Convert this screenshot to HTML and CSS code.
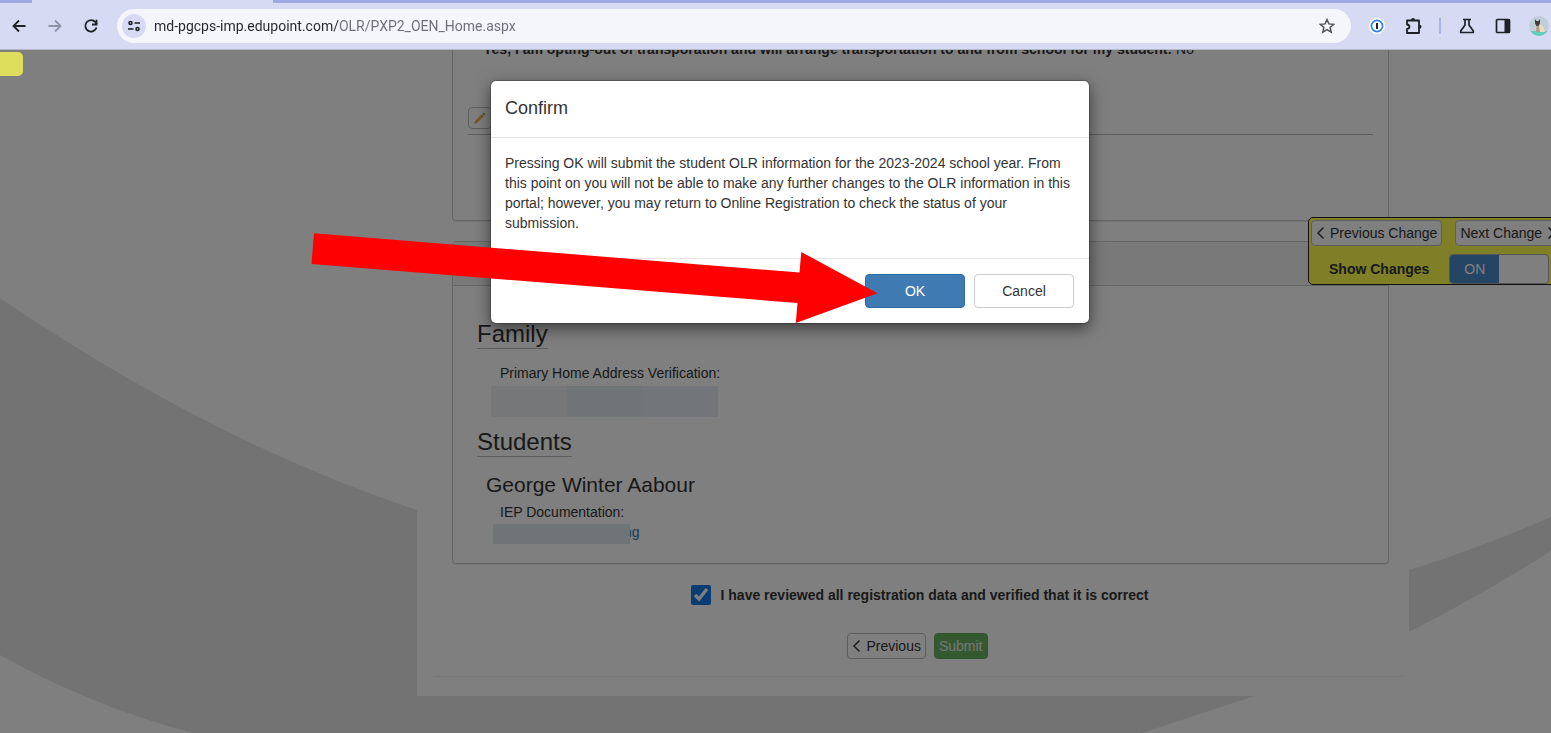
FILE: index.html
```html
<!DOCTYPE html>
<html lang="en">
<head>
    <meta charset="UTF-8">
    <meta name="viewport" content="width=device-width, initial-scale=1.0">
    <title>Online Registration</title>
    <link rel="stylesheet" href="styles.css">
</head>
<body>
    <header class="browser">
        <div class="tab-strip"><div class="active-tab"></div></div>
        <div class="toolbar">
            <button class="tool" aria-label="Back">
                <svg width="16" height="16" viewBox="0 0 16 16" fill="none" stroke="#1f2128" stroke-width="1.800"><path d="M14.500 8H3M8 2.500L2.500 8 8 13.500"/></svg>
            </button>
            <button class="tool" aria-label="Forward">
                <svg width="16" height="16" viewBox="0 0 16 16" fill="none" stroke="#8e93a8" stroke-width="1.800"><path d="M1.500 8H13M8 2.500l5.500 5.500L8 13.500"/></svg>
            </button>
            <button class="tool" aria-label="Reload">
                <svg width="16" height="16" viewBox="0 0 16 16" fill="none" stroke="#1f2128" stroke-width="1.800"><path d="M13.500 9.500A5.700 5.700 0 1 1 12.400 4.200L14 6"/><path d="M13.500 1.800v4.700H9"/></svg>
            </button>
            <div class="address">
                <button class="site-info" aria-label="Site information">
                    <svg width="14" height="12" viewBox="0 0 14 12" fill="none" stroke="#1f2128" stroke-width="1.600"><circle cx="3.500" cy="3" r="1.500"/><path d="M7.500 3H13M1 9h5.500"/><circle cx="10.500" cy="9" r="1.500"/></svg>
                </button>
                <input class="url" type="text" aria-label="Address" value="md-pgcps-imp.edupoint.com/OLR/PXP2_OEN_Home.aspx">
                <button class="star" aria-label="Bookmark">
                    <svg width="16" height="16" viewBox="0 0 16 16" fill="none" stroke="#50525a" stroke-width="1.500"><path d="M8 1.500l1.900 4.400 4.800.4-3.600 3.200 1.100 4.700L8 11.700l-4.200 2.500 1.100-4.700L1.300 6.300l4.800-.4z"/></svg>
                </button>
            </div>
            <div class="extensions">
                <button class="tool" aria-label="Password manager">
                    <svg width="16" height="16" viewBox="0 0 16 16"><circle cx="8" cy="8" r="8" fill="#fff"/><circle cx="8" cy="8" r="5.600" fill="#fff" stroke="#2f83e0" stroke-width="1.700"/><rect x="7" y="5" width="2" height="6" fill="#1f2128"/></svg>
                </button>
                <button class="tool" aria-label="Extensions">
                    <svg width="18" height="18" viewBox="0 0 18 18"><path d="M3 3.500h12v12.500H3v-4c3.200-.3 3.200-4.200 0-4.500z" fill="none" stroke="#1f2128" stroke-width="1.800" stroke-linejoin="round"/><path d="M7 3a2 2 0 0 1 4 0zM15.500 7.700a2 2 0 0 1 0 4z" fill="#1f2128"/></svg>
                </button>
                <span class="separator"></span>
                <button class="tool" aria-label="Labs">
                    <svg width="16" height="16" viewBox="0 0 16 16" fill="none" stroke="#1f2128" stroke-width="1.700" stroke-linejoin="round"><path d="M4 1.500h8M6 2v5L1.700 13v1.500h12.600V13L10 7V2"/></svg>
                </button>
                <button class="tool" aria-label="Side panel">
                    <svg width="16" height="16" viewBox="0 0 16 16"><rect x="1.500" y="1.500" width="13" height="13" rx="1" fill="none" stroke="#1f2128" stroke-width="1.700"/><path d="M9.500 1H14l1 1v12l-1 1H9.500z" fill="#1f2128"/></svg>
                </button>
                <button class="tool" aria-label="Profile">
                    <svg width="20" height="20" viewBox="0 0 20 20"><circle cx="10" cy="10" r="10" fill="#bfcfda"/><path d="M1.500 15h17A10 10 0 0 1 1.500 15z" fill="#5fcdbb"/><path d="M9 9c4-1 7 3 7 7H8z" fill="#e6ddc4"/><path d="M6 3l1.500 2h2L11 3v4.500L9.500 10h-2L6 7.500z" fill="#4d3d38"/><path d="M7.500 10h2.500l1 6H7z" fill="#b39c80"/></svg>
                </button>
            </div>
        </div>
    </header>

    <div class="viewport">
        <svg class="swoosh" viewBox="0 50 1551 683" preserveAspectRatio="xMinYMin slice" aria-hidden="true">
            <path d="M0 298Q212 442 417 510C740 620 1080 665 1409 570Q1480 548 1551 517V551Q1480 596 1409 632Q1335 668 1255 696L1142 733H193Q93 707 0 655z" fill="#e6e6e6"/>
        </svg>

        <main class="content">
            <section class="panel transport">
                <p class="answer"><b>Yes, I am opting-out of transporation and will arrange transportation to and from school for my student:</b> No</p>
                <button class="btn edit" aria-label="Edit">
                    <svg width="14" height="14" viewBox="0 0 14 14"><path d="M1 13l1-3L9 3l2 2-7 7z" fill="#f0ad4e"/><path d="M9.500 2.500l1-1 2 2-1 1z" fill="#b98a4a"/></svg>
                </button>
                <hr>
            </section>

            <section class="panel documents">
                <div class="panel-heading"></div>
                <div class="panel-body">
                    <h3>Family</h3>
                    <p class="doc-label">Primary Home Address Verification:</p>
                    <div class="masked"><span></span><span></span><span></span></div>
                    <h3>Students</h3>
                    <h4>George Winter Aabour</h4>
                    <p class="doc-label">IEP Documentation:</p>
                    <div class="doc-file"><a href="#">ng</a><span class="file-mask"></span></div>
                </div>
            </section>

            <div class="review">
                <input type="checkbox" id="reviewed" checked>
                <label for="reviewed">I have reviewed all registration data and verified that it is correct</label>
            </div>
            <div class="actions">
                <button class="btn"><svg width="9" height="14" viewBox="0 0 9 14" fill="none" stroke="#444" stroke-width="1.600"><path d="M7.500 1.500L2 7l5.500 5.500"/></svg>Previous</button>
                <button class="btn submit">Submit</button>
            </div>
            <hr class="footer-line">
        </main>

        <aside class="changes">
            <div class="change-nav">
                <button class="btn"><svg width="9" height="14" viewBox="0 0 9 14" fill="none" stroke="#444" stroke-width="1.600"><path d="M7.500 1.500L2 7l5.500 5.500"/></svg>Previous Change</button>
                <button class="btn">Next Change<svg width="9" height="14" viewBox="0 0 9 14" fill="none" stroke="#444" stroke-width="1.600"><path d="M1.500 1.500L7 7l-5.500 5.500"/></svg></button>
            </div>
            <div class="change-toggle">
                <label for="show-changes">Show Changes</label>
                <span class="switch"><input type="checkbox" id="show-changes" checked><span class="on">ON</span></span>
            </div>
        </aside>

        <div class="backdrop">
            <div class="modal" role="dialog" aria-labelledby="confirm-title">
                <h2 class="modal-title" id="confirm-title">Confirm</h2>
                <p class="modal-body">Pressing OK will submit the student OLR information for the 2023-2024 school year. From this point on you will not be able to make any further changes to the OLR information in this portal; however, you may return to Online Registration to check the status of your submission.</p>
                <div class="modal-footer">
                    <button class="modal-btn primary">OK</button>
                    <button class="modal-btn">Cancel</button>
                </div>
            </div>
        </div>
        <div class="marker"></div>
        <svg class="arrow" width="568" height="92" viewBox="311 232 568 92" aria-hidden="true">
            <path d="M314 233.300L799.500 272.500 801.300 252 877.500 293.200 795.800 323 797.500 303 311.500 264z" fill="#f00"/>
        </svg>
    </div>
</body>
</html>
```
FILE: styles.css
```css
* {
    box-sizing: border-box;
}

body {
    display: flex;
    flex-direction: column;
    height: 100vh;
    margin: 0;
    overflow: hidden;
    font-family: "Liberation Sans", Arial, sans-serif;
    font-size: 14px;
    line-height: 20px;
    color: #333;
}

button,
input {
    font: inherit;
    color: inherit;
}

p,
h2,
h3,
h4 {
    margin: 0;
    font-weight: normal;
}

/* browser bar */
.browser {
    flex: none;
    background: #d6daf3;
    border-bottom: 1px solid #b4b7c8;
}

.tab-strip {
    height: 3px;
    padding-left: 32px;
    background: #9fa8e0;
}

.active-tab {
    width: 241px;
    height: 3px;
    background: #d6daf3;
}

.toolbar {
    display: flex;
    align-items: center;
    height: 46px;
    padding-left: 9px;
}

.tool {
    display: flex;
    flex: none;
    justify-content: center;
    width: 20px;
    margin-right: 16px;
    padding: 0;
    border: none;
    background: none;
}

.address {
    display: flex;
    flex: 1;
    align-items: center;
    height: 34px;
    padding: 0 16px 0 5px;
    border-radius: 17px;
    background: #f5f6fc;
}

.site-info {
    display: flex;
    align-items: center;
    justify-content: center;
    width: 24px;
    height: 24px;
    padding: 0;
    border: none;
    border-radius: 50%;
    background: #d6daf3;
}

/* host is darker than the path */
.url {
    flex: 1;
    height: 24px;
    margin-left: 8px;
    padding: 0;
    border: none;
    font-family: Roboto, sans-serif;
    font-size: 14px;
    color: #303238;
    background: linear-gradient(90deg, #24262c 185px, #6b6d76 185px);
    background-clip: text;
    -webkit-background-clip: text;
    -webkit-text-fill-color: transparent;
}

.star {
    display: flex;
    padding: 0;
    border: none;
    background: none;
}

.extensions {
    display: flex;
    align-items: center;
    margin-left: 16px;
    margin-right: -14px;
}

.separator {
    width: 2px;
    height: 16px;
    margin-right: 16px;
    background: #a9b4e4;
}

/* page */
.viewport {
    position: relative;
    flex: 1;
    overflow: hidden;
    background: #fff;
}

.swoosh {
    position: absolute;
    top: 0;
    left: 0;
    width: 100%;
    height: 100%;
}

.content {
    position: relative;
    margin: -28px 142px 0 417px;
    padding: 0 20px 19px 35px;
    background: #fff;
}

.panel {
    margin-bottom: 20px;
    border: 1px solid #ccc;
    border-radius: 4px;
    background: #fff;
    box-shadow: 0 1px 1px rgba(0, 0, 0, 0.1);
}

.panel hr {
    margin: 5px 0 0;
    border: none;
    border-top: 1px solid #bbb;
}

.transport {
    height: 199px;
    padding: 16px 15px;
}

.answer {
    margin: 0 0 48px 15px;
}

.btn {
    display: flex;
    align-items: center;
    gap: 5px;
    height: 26px;
    padding: 0 4px;
    border: 1px solid #bbb;
    border-radius: 4px;
    background: #fff;
    white-space: nowrap;
}

.edit {
    height: 22px;
}

.documents {
    height: 323px;
}

.panel-heading {
    height: 44px;
    border-bottom: 1px solid #ccc;
    background: #f2f2f2;
}

.panel-body {
    padding: 33px 24px;
}

h3 {
    width: fit-content;
    border-bottom: 1px solid #bbb;
    font-size: 24px;
    line-height: 29px;
}

h4 {
    margin: 16px 9px 5px;
    font-size: 21px;
    line-height: 24px;
}

.doc-label {
    margin-left: 23px;
}

h3 + .doc-label {
    margin-top: 14px;
}

.masked {
    display: flex;
    width: 227px;
    height: 31px;
    margin: 3px 14px 10px;
}

.masked span {
    flex: 1;
    background: #e4edf4;
}

.masked span:first-child {
    background: #ebeff3;
}

.masked span:nth-child(2) {
    background: #dfe8ef;
}

.doc-file {
    position: relative;
    width: fit-content;
    padding-left: 147px;
}

.doc-file a {
    color: #337ab7;
    text-decoration: none;
}

.file-mask {
    position: absolute;
    top: 2px;
    left: 16px;
    width: 137px;
    height: 20px;
    background: #dfe8ef;
}

.review {
    display: flex;
    align-items: center;
    justify-content: center;
    gap: 10px;
    margin-top: 21px;
    padding-right: 2px;
    font-weight: bold;
}

.review input {
    width: 20px;
    height: 20px;
    margin: 0;
    accent-color: #1478e8;
}

.actions {
    display: flex;
    justify-content: center;
    gap: 8px;
    margin: 28px 0 17px;
    padding-right: 6px;
}

.submit {
    border-color: #5cae55;
    color: #eee;
    background: #68b362;
}

.footer-line {
    margin: 0 -14px 0 -18px;
    border: none;
    border-top: 1px solid #eee;
}

/* change tracker, runs past the right edge */
.changes {
    position: absolute;
    top: 167px;
    right: -16px;
    width: 259px;
    height: 68px;
    padding: 2px;
    border: 1px solid #222;
    border-radius: 5px;
    background: #ffff50;
}

.change-nav {
    display: flex;
    gap: 13px;
}

.change-toggle {
    display: flex;
    align-items: center;
    gap: 20px;
    margin: 8px 0 0 18px;
    font-weight: bold;
}

.switch {
    position: relative;
    width: 100px;
    height: 30px;
    border: 1px solid #aaa;
    border-radius: 4px;
    background: #fff;
    overflow: hidden;
}

.switch input {
    position: absolute;
    inset: 0;
    width: 100%;
    height: 100%;
    margin: 0;
    opacity: 0;
}

.on {
    display: block;
    width: 49px;
    height: 28px;
    font-weight: normal;
    line-height: 28px;
    text-align: center;
    color: #fff;
    background: #4a8bc8;
}

/* dialog */
.backdrop {
    position: absolute;
    inset: 0;
    padding: 30px 0 0 29px;
    background: rgba(0, 0, 0, 0.5);
}

.modal {
    width: 600px;
    margin: 0 auto;
    border: 1px solid rgba(0, 0, 0, 0.2);
    border-radius: 6px;
    background: #fff;
    background-clip: padding-box;
    box-shadow: 0 5px 15px rgba(0, 0, 0, 0.5);
}

.modal-title {
    padding: 13px 14px 15px;
    font-size: 18px;
    line-height: 28px;
    border-bottom: 1px solid #e5e5e5;
}

.modal-body {
    padding: 15px 14px 25px;
}

.modal-footer {
    display: flex;
    justify-content: flex-end;
    gap: 9px;
    padding: 15px;
    border-top: 1px solid #e5e5e5;
}

.modal-btn {
    width: 100px;
    height: 34px;
    border: 1px solid #ccc;
    border-radius: 4px;
    background: #fff;
}

.primary {
    border-color: #2e6da4;
    color: #fff;
    background: #3f7ab3;
}

.marker {
    position: absolute;
    top: 2px;
    left: -4px;
    width: 27px;
    height: 24px;
    border-radius: 5px;
    background: #dfde5c;
}

.arrow {
    position: absolute;
    top: 182px;
    left: 311px;
    pointer-events: none;
}
```
